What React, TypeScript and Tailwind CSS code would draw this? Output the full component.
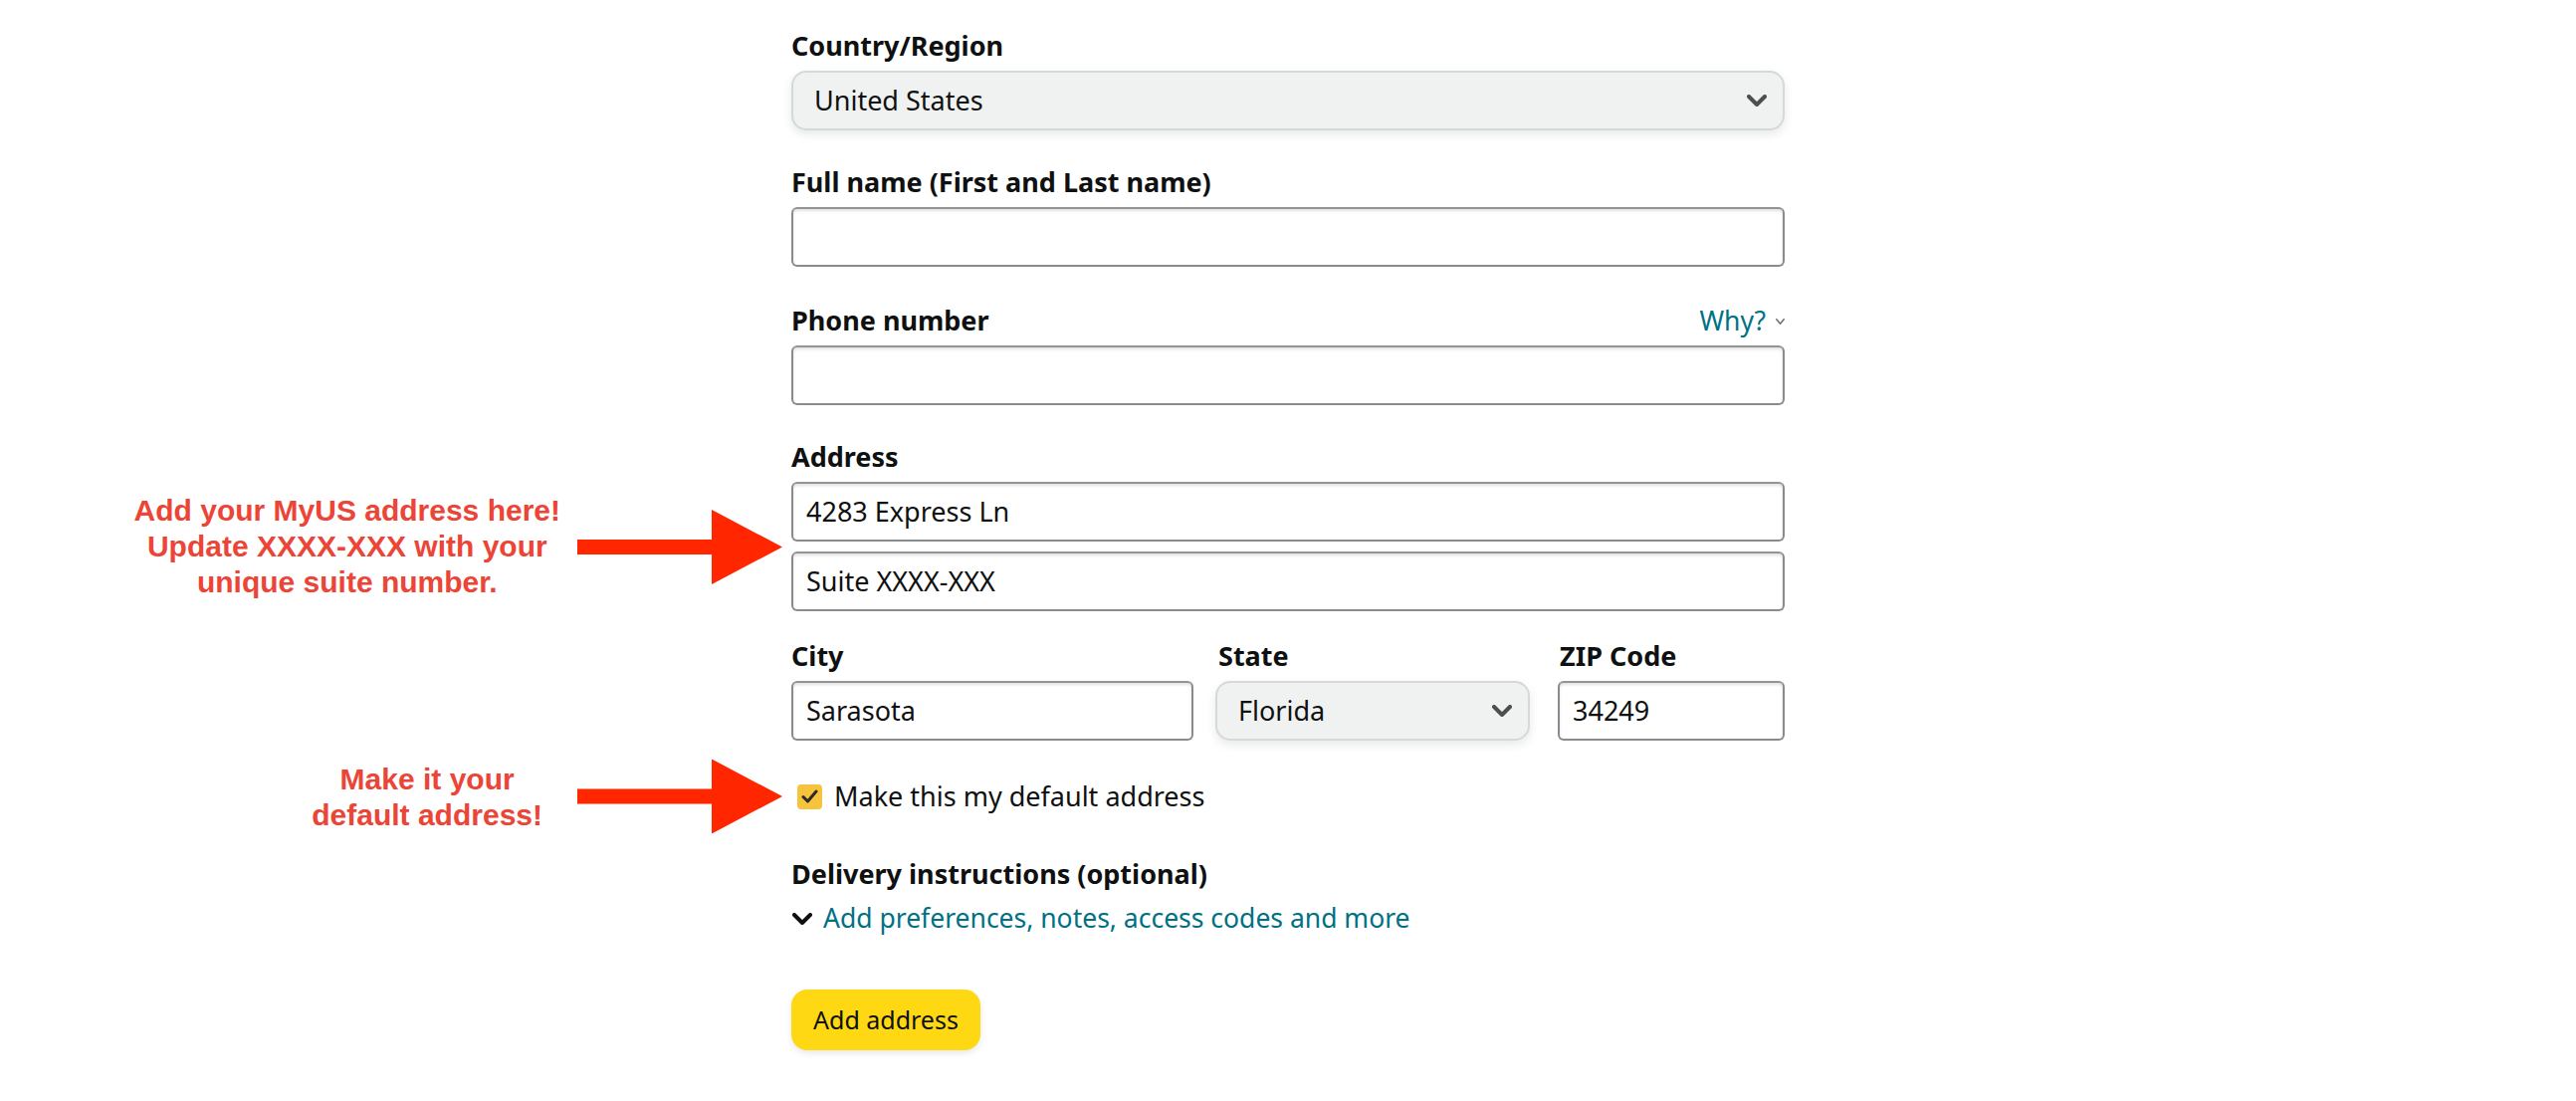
import React from 'react';

const Chevron = ({ className = '', color = '#555', w = 20, h = 12, sw = 4 }: { className?: string; color?: string; w?: number; h?: number; sw?: number }) => (
  <svg width={w} height={h} viewBox={`0 0 ${w} ${h}`} className={className} fill="none">
    <polyline points={`${sw / 2},${sw / 2} ${w / 2},${h - sw / 2} ${w - sw / 2},${sw / 2}`} stroke={color} strokeWidth={sw} strokeLinecap="round" strokeLinejoin="round" />
  </svg>
);

const Arrow = () => (
  <svg width="206" height="75" viewBox="0 0 206 75" className="shrink-0">
    <rect x="0" y="30" width="136" height="15" fill="#FF2600" />
    <polygon points="135,0 206,37.5 135,75" fill="#FF2600" />
  </svg>
);

function Annotation({ lines, gap }: { lines: string[]; gap: string }) {
  return (
    <div className="absolute right-[calc(100%+9px)] top-1/2 -translate-y-1/2 flex items-center">
      <div className={`text-center whitespace-nowrap font-['Liberation_Sans',Arial,sans-serif] font-bold text-[30px] leading-[36px] text-[#EC4436] ${gap}`}>
        {lines.map((l) => (
          <div key={l}>{l}</div>
        ))}
      </div>
      <Arrow />
    </div>
  );
}

function Label({ children, className = '' }: { children: React.ReactNode; className?: string }) {
  return <div className={`text-[27px] font-bold leading-[38px] text-[#0F1111] mb-[6px] ${className}`}>{children}</div>;
}

function TextBox({ value = '', className = '', pad = 'pl-[13px]' }: { value?: string; className?: string; pad?: string }) {
  return (
    <div className={`h-[60px] flex items-center border-2 border-[#888C8C] border-t-[#949494] rounded-[6px] bg-white shadow-[inset_0_2px_3px_rgba(15,17,17,0.12)] text-[27px] text-[#0F1111] ${pad} ${className}`}>
      {value}
    </div>
  );
}

function SelectBox({ value, className = '' }: { value: string; className?: string }) {
  return (
    <div className={`h-[60px] flex items-center justify-between pl-[21px] pr-[16px] border-2 border-[#D5D9D9] rounded-[15px] bg-[#F0F2F2] shadow-[0_4px_10px_rgba(213,217,217,0.6)] text-[27px] text-[#0F1111] ${className}`}>
      <span>{value}</span>
      <Chevron color="#4b4f4f" />
    </div>
  );
}

export default function App() {
  return (
    <div className="min-h-[1106px] w-full bg-white font-['Noto_Sans',sans-serif]">
      <div className="w-[998px] mx-auto pt-[27px]">
        <Label>Country/Region</Label>
        <SelectBox value="United States" />

        <Label className="mt-[33px]">Full name (First and Last name)</Label>
        <TextBox />

        <div className="mt-[35px] flex items-start justify-between">
          <Label>Phone number</Label>
          <div className="flex items-center gap-[10px] text-[26.5px] leading-[38px] text-[#007185]">
            <span>Why?</span>
            <Chevron w={9} h={6} sw={1.6} color="#6f7373" className="mt-[2px]" />
          </div>
        </div>
        <TextBox />

        <Label className="mt-[33px]">Address</Label>
        <div className="relative flex flex-col gap-[10px]">
          <TextBox value="4283 Express Ln" />
          <TextBox value="Suite XXXX-XXX" />
          <Annotation lines={['Add your MyUS address here!', 'Update XXXX-XXX with your', 'unique suite number.']} gap="mr-[17px]" />
        </div>

        <div className="mt-[26px] flex">
          <div className="w-[404px]">
            <Label>City</Label>
            <TextBox value="Sarasota" />
          </div>
          <div className="w-[316px] ml-[22px]">
            <Label className="pl-[3px]">State</Label>
            <SelectBox value="Florida" />
          </div>
          <div className="w-[228px] ml-[28px]">
            <Label className="pl-[2px]">ZIP Code</Label>
            <TextBox value="34249" />
          </div>
        </div>

        <div className="relative mt-[37px] flex items-center h-[38px] pl-[6px]">
          <div className="w-[25px] h-[25px] rounded-[4px] bg-[#F7C33D] flex items-center justify-center">
            <svg width="17" height="14" viewBox="0 0 17 14" fill="none">
              <polyline points="2,7.5 6.5,12 15,2" stroke="#2b2b2b" strokeWidth="3" strokeLinecap="round" strokeLinejoin="round" />
            </svg>
          </div>
          <span className="ml-[12px] text-[27px] leading-[38px] text-[#0F1111]">Make this my default address</span>
          <Annotation lines={['Make it your', 'default address!']} gap="mr-[35px]" />
        </div>

        <div className="mt-[40px] text-[27px] font-bold leading-[38px] text-[#0F1111]">Delivery instructions (optional)</div>
        <div className="mt-[6px] flex items-center leading-[38px] text-[26.5px]">
          <Chevron color="#0F1111" className="ml-[1px] mt-[2px]" />
          <span className="ml-[11px] text-[#007185]">Add preferences, notes, access codes and more</span>
        </div>

        <button className="mt-[53px] w-[190px] h-[61px] rounded-[16px] bg-[#FFD814] shadow-[0_3px_6px_rgba(213,217,217,0.6)] text-[25px] text-[#0F1111] flex items-center justify-center">
          Add address
        </button>
      </div>
    </div>
  );
}
